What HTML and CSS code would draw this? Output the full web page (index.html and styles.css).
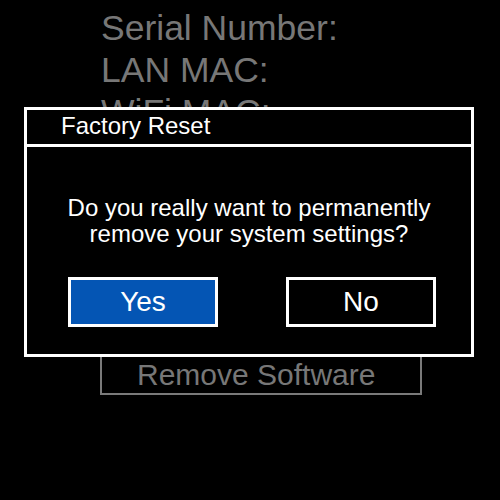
FILE: index.html
```html
<!DOCTYPE html>
<html>
<head>
<meta charset="utf-8">
<link rel="stylesheet" href="styles.css">
</head>
<body>
<div class="screen">
  <div class="info">
    <div class="info-line">Serial Number:</div>
    <div class="info-line">LAN MAC:</div>
    <div class="info-line">WiFi MAC:</div>
    <div class="action">Remove Software</div>
  </div>
  <div class="dialog">
    <div class="dialog-title">Factory Reset</div>
    <div class="dialog-body">
      <div class="message">Do you really want to permanently<br>remove your system settings?</div>
      <div class="buttons">
        <div class="btn btn-primary">Yes</div>
        <div class="btn">No</div>
      </div>
    </div>
  </div>
</div>
</body>
</html>
```
FILE: styles.css
```css
html, body {
  margin: 0;
  padding: 0;
  background: #000;
}
.screen {
  position: relative;
  width: 500px;
  height: 500px;
  background: #000;
  font-family: "Liberation Sans", Arial, sans-serif;
  overflow: hidden;
}
.info {
  padding: 7px 0 0 100px;
  color: #777;
}
.info-line {
  font-size: 35.5px;
  line-height: 42px;
  padding-left: 1px;
  white-space: nowrap;
}
.action {
  margin-top: 219px;
  width: 322px;
  box-sizing: border-box;
  border: 2px solid #7a7a7a;
  font-size: 30px;
  line-height: 36px;
  padding: 3px 0 0 35px;
  height: 43px;
  color: #777;
}
.dialog {
  position: absolute;
  left: 24px;
  top: 107px;
  width: 450px;
  height: 250px;
  box-sizing: border-box;
  border: 3px solid #fff;
  background: #000;
  color: #fff;
}
.dialog-title {
  font-size: 24px;
  line-height: 32px;
  padding: 0 0 2px 34px;
  border-bottom: 3px solid #fff;
}
.dialog-body {
  padding-top: 48px;
}
.message {
  font-size: 24px;
  line-height: 26px;
  text-align: center;
}
.buttons {
  display: flex;
  gap: 68px;
  margin-top: 30px;
  padding-left: 41px;
}
.btn {
  width: 150px;
  height: 50px;
  box-sizing: border-box;
  border: 3px solid #fff;
  font-size: 28px;
  line-height: 44px;
  text-align: center;
  color: #fff;
  background: #000;
}
.btn-primary {
  background: #0455b4;
}
```
